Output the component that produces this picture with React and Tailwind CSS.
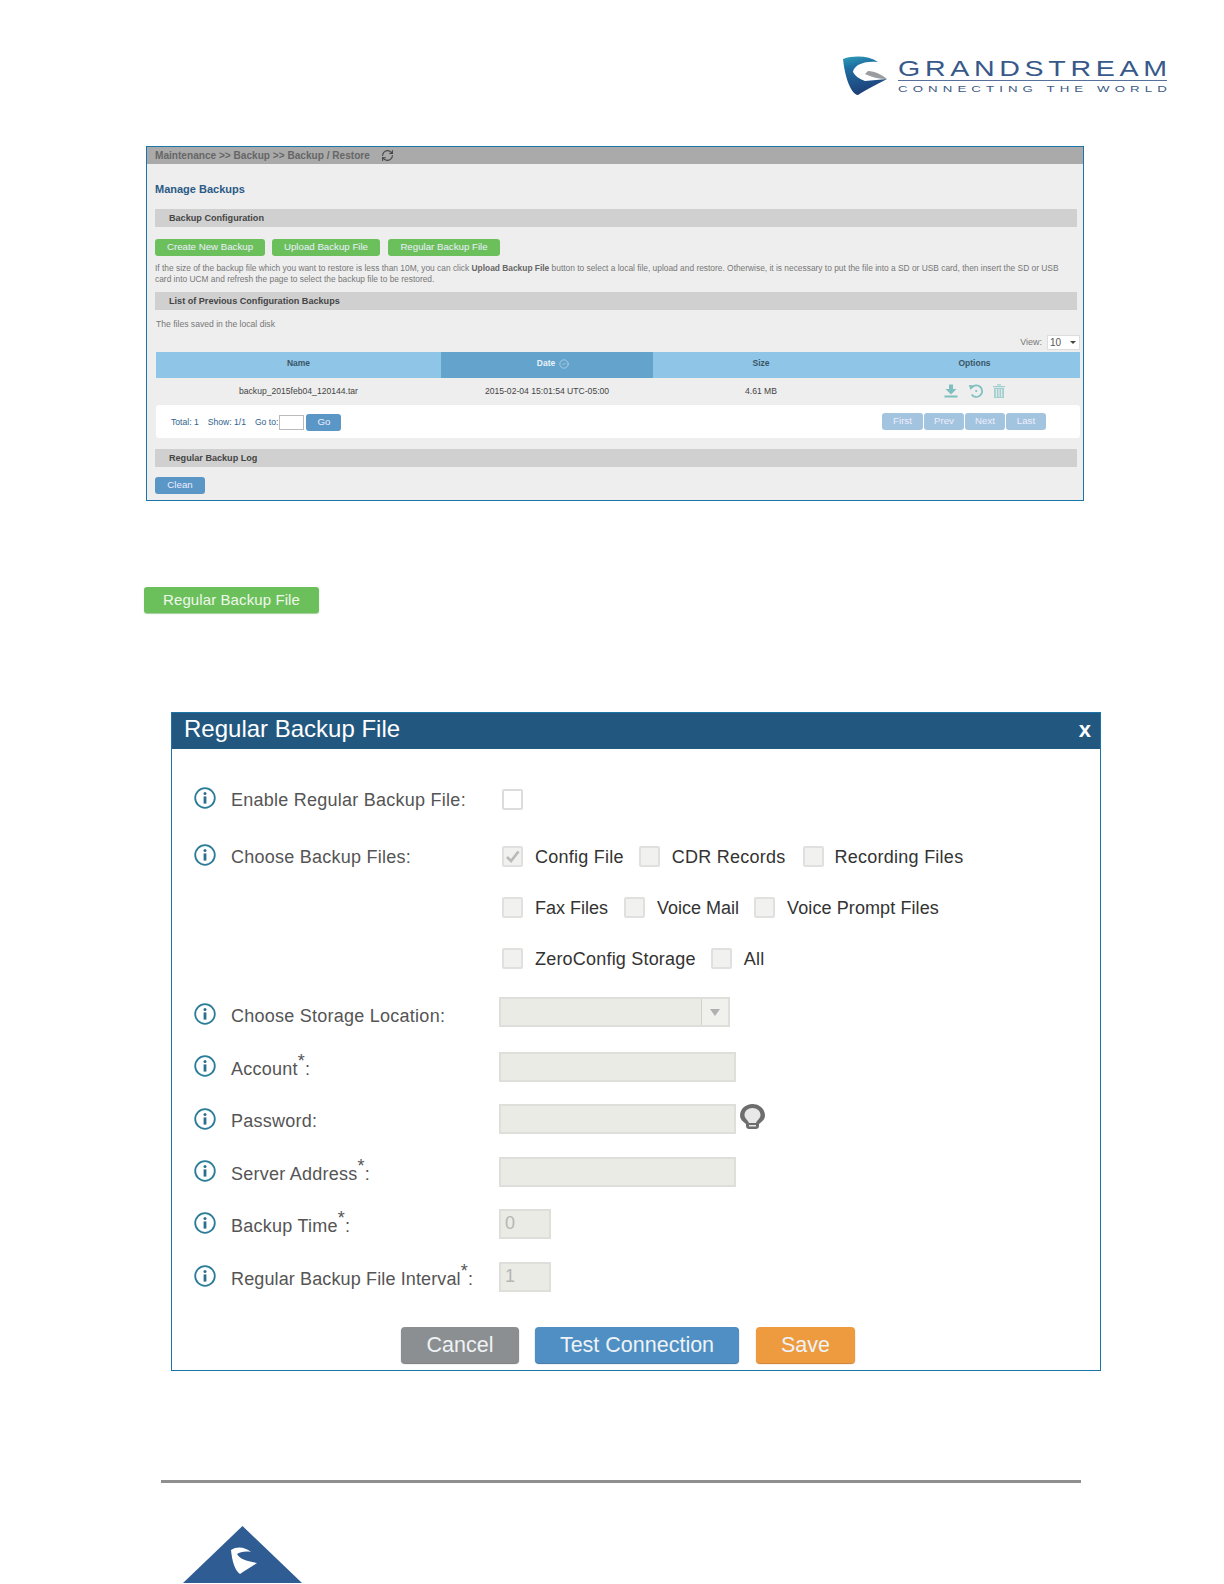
import { RefreshCw, CircleCheck } from 'lucide-react'

function Logo() {
  return (
    <svg width="340" height="52" viewBox="0 0 340 52">
      <defs>
        <linearGradient id="markBlue" x1="0" y1="0" x2="0.25" y2="1">
          <stop offset="0" stopColor="#2f9db5" />
          <stop offset="0.3" stopColor="#1f6fa3" />
          <stop offset="1" stopColor="#1d3f77" />
        </linearGradient>
      </defs>
      <path d="M8 9 C20 5 34 6 43 12 C36 11 28 12 23 15 C20 17 18 20 18 22 C20 26 24 29 30 31 L52 29 C42 34 31 40 23 45 C16 44 10 28 8 9 Z" fill="url(#markBlue)" />
      <path d="M33 21 C40 21 47 25 52 29 C44 29 36 27 30 24 Z" fill="#9a9c9f" />
      <g transform="translate(63 0) scale(1.3 1)">
        <text x="0" y="26" fontSize="22" fontFamily="'Liberation Sans', sans-serif" fill="#37598a" textLength="207" lengthAdjust="spacing">GRANDSTREAM</text>
      </g>
      <rect x="63" y="30" width="269" height="1" fill="#55709a" />
      <g transform="translate(63 0) scale(1.4 1)">
        <text x="0" y="42" fontSize="9.5" fontFamily="'Liberation Sans', sans-serif" fill="#3d5a85" textLength="192" lengthAdjust="spacing">CONNECTING THE WORLD</text>
      </g>
    </svg>
  )
}

function SectionBar({ children }) {
  return (
    <div className="h-[18px] bg-[#d0d0d0] pl-[14px] text-[9.1px] leading-[19px] font-bold text-[#444]">{children}</div>
  )
}

function SmallButton({ children, color = 'bg-[#6cc05c]', className = '' }) {
  return (
    <div className={`h-[17px] rounded-[3px] flex items-center justify-center text-[9.7px] text-[#eef] ${color} ${className}`}>
      {children}
    </div>
  )
}

function DownloadIcon() {
  return (
    <svg width="14" height="14" viewBox="0 0 14 14" fill="#7fbfbf">
      <path d="M5 0.5 H9 V5 H12.5 L7 10.5 L1.5 5 H5 Z" />
      <rect x="0.5" y="11.5" width="13" height="2" />
    </svg>
  )
}

function RestoreIcon() {
  return (
    <svg width="15" height="14" viewBox="0 0 15 14" fill="none" stroke="#7fbfbf" strokeWidth="1.7">
      <path d="M3.5 4 A5.8 5.8 0 1 1 3.6 10.5" />
      <path d="M0.8 1 L6 1.5 L2.5 6 Z" fill="#7fbfbf" stroke="none" />
      <circle cx="8.2" cy="7" r="1.1" fill="#7fbfbf" stroke="none" />
    </svg>
  )
}

function TrashIcon() {
  return (
    <svg width="12" height="14" viewBox="0 0 12 14" fill="#a3cfcf">
      <rect x="0" y="2" width="12" height="1.3" />
      <rect x="4" y="0.3" width="4" height="1.3" />
      <path d="M1 4 H11 V14 H1 Z M2.8 5 V13 H3.8 V5 Z M5.5 5 V13 H6.5 V5 Z M8.2 5 V13 H9.2 V5 Z" fillRule="evenodd" />
    </svg>
  )
}

function InfoIcon({ className = '' }) {
  return (
    <svg width="22" height="22" viewBox="0 0 22 22" className={`shrink-0 ${className}`}>
      <circle cx="11" cy="11" r="9.8" fill="none" stroke="#2b7c99" strokeWidth="1.8" />
      <circle cx="11" cy="6.6" r="1.5" fill="#2b6f8f" />
      <rect x="9.6" y="9.4" width="2.8" height="7.2" fill="#2b6f8f" />
    </svg>
  )
}

function BulbIcon() {
  return (
    <svg width="25" height="25" viewBox="0 0 25 25" className="ml-[4px] self-start">
      <path d="M12.5 0 C19.5 0 25 5 25 11.5 C25 15 22.5 17.5 19 20 V22 C19 23.8 17.5 25 16 25 H9 C7.5 25 6 23.8 6 22 V20 C2.5 17.5 0 15 0 11.5 C0 5 5.5 0 12.5 0 Z" fill="#6d6d6d" />
      <path d="M12.5 4 C17 4 20.5 7 20.5 11 C20.5 14.5 17 16 16 19 H9 C8 16 4.5 14.5 4.5 11 C4.5 7 8 4 12.5 4 Z" fill="#e8e8e8" />
      <rect x="9" y="21" width="7" height="1.5" fill="#e8e8e8" />
    </svg>
  )
}

function Checkbox({ checked, disabled = true, className = '' }) {
  return (
    <div className={`w-[21px] h-[21px] shrink-0 rounded-[2px] border-2 flex items-center justify-center ${disabled ? 'border-[#e0e0de] bg-[#f1f1f0]' : 'border-[#dcdcdc] bg-white'} ${className}`}>
      {checked && (
        <svg width="15" height="13" viewBox="0 0 15 13" fill="none" stroke="#b9b9b9" strokeWidth="2.6">
          <path d="M2 7 L6 11 L13.5 1.5" />
        </svg>
      )}
    </div>
  )
}

function FormRow({ label, star, iconClass = '', labelClass = 'mt-[4px]', track = 'tracking-[0.25px]', className = '', children }) {
  return (
    <div className={`flex items-center h-[30px] ${className}`}>
      <InfoIcon className={star ? '-mt-[2px]' : iconClass} />
      <div className={`w-[283px] shrink-0 pl-[15px] text-[18px] leading-[24px] text-[#555] whitespace-nowrap ${track} ${star ? '-mt-[2px]' : labelClass}`}>
        {label}
        {star && <span className="text-[18px] leading-none align-[8px]">*</span>}
        {star && ':'}
      </div>
      {children}
    </div>
  )
}

function Option({ label, checked, gap = 'ml-[12px]', track = 'tracking-[0.25px]', className = '' }) {
  return (
    <>
      <Checkbox checked={checked} className={className} />
      <span className={`${gap} ${track} mt-[2px] text-[18px] leading-[24px] text-[#333] whitespace-nowrap`}>{label}</span>
    </>
  )
}

function TextBox({ className = 'w-[237px]', value }) {
  return (
    <div className={`h-[30px] border-2 border-[#dededa] bg-[#ebebe5] pl-[4px] text-[18px] leading-[24px] text-[#b5b5b5] ${className}`}>{value}</div>
  )
}

export default function App() {
  return (
    <div className="w-[1224px] h-[1584px] overflow-hidden bg-white font-['Liberation_Sans',Arial,sans-serif]">
      <div className="h-[146px] pl-[835px] pt-[50px]">
        <Logo />
      </div>

      <div className="ml-[146px] w-[938px] h-[355px] border border-[#1b75a8] bg-[#eeeeee]">
        <div className="h-[17px] bg-[#aaaaaa] pl-[8px] flex items-center text-[10.1px] font-bold text-[#666]">
          Maintenance &gt;&gt; Backup &gt;&gt; Backup / Restore
          <RefreshCw size={13} strokeWidth={2} className="ml-[11px] text-[#444]" />
        </div>
        <div className="pl-[8px] pr-[6px]">
          <div className="mt-[17px] h-[16px] text-[11px] leading-[16px] font-bold text-[#2a5a85]">Manage Backups</div>
          <div className="mt-[12px]"><SectionBar>Backup Configuration</SectionBar></div>
          <div className="mt-[12px] flex">
            <SmallButton className="w-[110px]">Create New Backup</SmallButton>
            <SmallButton className="w-[108px] ml-[7px]">Upload Backup File</SmallButton>
            <SmallButton className="w-[112px] ml-[8px]">Regular Backup File</SmallButton>
          </div>
          <p className="mt-[7px] w-[915px] text-[8.4px] leading-[11px] text-[#777]">
            If the size of the backup file which you want to restore is less than 10M, you can click <b className="text-[#666]">Upload Backup File</b> button to select a local file, upload and restore. Otherwise, it is necessary to put the file into a SD or USB card, then insert the SD or USB card into UCM and refresh the page to select the backup file to be restored.
          </p>
          <div className="mt-[7px]"><SectionBar>List of Previous Configuration Backups</SectionBar></div>
          <div className="mt-[9px] h-[11px] pl-[1px] text-[8.6px] leading-[11px] text-[#777]">The files saved in the local disk</div>
          <div className="mt-[5px] h-[15px] -mr-[3px] flex items-center justify-end text-[9px] text-[#777]">
            View:
            <div className="ml-[5px] w-[33px] h-[15px] bg-white border border-[#ddd] flex items-center justify-between pl-[2px] pr-[3px] text-[10px] text-[#555]">
              10
              <span className="w-0 h-0 border-x-[3px] border-x-transparent border-t-[3px] border-t-[#444]" />
            </div>
          </div>
          <div className="mt-[2px] ml-[1px] -mr-[3px]">
            <div className="grid grid-cols-[285px_212px_216px_211px] h-[26px] bg-[#8fc5e6] text-[8.5px] font-bold text-[#3a5566] text-center leading-[23px]">
              <div>Name</div>
              <div className="bg-[#64a3cb] text-[#e8f2f8] font-normal flex items-center justify-center pl-[12px] pb-[3px]">
                <span className="font-bold">Date</span>
                <CircleCheck size={10} strokeWidth={1.2} className="ml-[4px]" />
              </div>
              <div>Size</div>
              <div>Options</div>
            </div>
            <div className="grid grid-cols-[285px_212px_216px_211px] h-[27px] items-center text-center text-[8.6px] text-[#444]">
              <div>backup_2015feb04_120144.tar</div>
              <div>2015-02-04 15:01:54 UTC-05:00</div>
              <div>4.61 MB</div>
              <div className="flex items-center justify-center gap-[10px] pb-[2px]">
                <DownloadIcon />
                <RestoreIcon />
                <TrashIcon />
              </div>
            </div>
            <div className="h-[33px] bg-white rounded-[3px] pl-[15px] pr-[34px] flex items-center justify-between">
              <div className="mt-[2px] flex items-center text-[8.6px] text-[#31638f]">
                <span>Total: 1</span>
                <span className="ml-[9px]">Show: 1/1</span>
                <span className="ml-[9px]">Go to:</span>
                <div className="ml-[1px] w-[25px] h-[15px] border border-[#bbb] bg-white" />
                <SmallButton color="bg-[#5a96c6]" className="ml-[2px] w-[35px]">Go</SmallButton>
              </div>
              <div className="flex gap-[1px]">
                <SmallButton color="bg-[#a3c4de]" className="w-[41px]">First</SmallButton>
                <SmallButton color="bg-[#a3c4de]" className="w-[40px]">Prev</SmallButton>
                <SmallButton color="bg-[#a3c4de]" className="w-[40px]">Next</SmallButton>
                <SmallButton color="bg-[#a3c4de]" className="w-[40px]">Last</SmallButton>
              </div>
            </div>
          </div>
          <div className="mt-[11px]"><SectionBar>Regular Backup Log</SectionBar></div>
          <SmallButton color="bg-[#5a96c6]" className="mt-[10px] w-[50px]">Clean</SmallButton>
        </div>
      </div>

      <div className="mt-[86px] ml-[144px] w-[175px] h-[26px] rounded-[3px] bg-[#6cc05c] shadow-[0_1px_1px_#9fcf97] flex items-center justify-center text-[15px] tracking-[0.1px] text-[#eef8ea]">
        Regular Backup File
      </div>

      <div className="mt-[99px] ml-[171px] w-[930px] h-[659px] border border-[#1b75a8] bg-white">
        <div className="h-[36px] bg-[#22587f] pl-[12px] pr-[9px] flex items-center justify-between text-white">
          <span className="text-[24px] mb-[4px]">Regular Backup File</span>
          <span className="text-[22px] font-bold leading-none mb-[2px]">x</span>
        </div>
        <div className="pl-[22px]">
          <FormRow label="Enable Regular Backup File:" className="mt-[34px]">
            <Checkbox disabled={false} className="ml-[3px] mt-[2px]" />
          </FormRow>
          <FormRow label="Choose Backup Files:" className="mt-[27px]">
            <div className="ml-[3px] mt-[2px] flex items-center">
              <Option label="Config File" checked />
              <Option label="CDR Records" className="ml-[15px]" />
              <Option label="Recording Files" className="ml-[17px]" gap="ml-[11px]" />
            </div>
          </FormRow>
          <div className="mt-[22px] pl-[308px] h-[30px] flex items-center">
            <Option label="Fax Files" track="tracking-[0px]" />
            <Option label="Voice Mail" track="tracking-[0px]" className="ml-[16px]" />
            <Option label="Voice Prompt Files" track="tracking-[0.1px]" className="ml-[15px]" />
          </div>
          <div className="mt-[21px] pl-[308px] h-[30px] flex items-center">
            <Option label="ZeroConfig Storage" track="tracking-[0.2px]" />
            <Option label="All" className="ml-[15px]" />
          </div>
          <FormRow label="Choose Storage Location:" iconClass="mt-[4px]" labelClass="mt-[8px]" className="mt-[24px]">
            <div className="w-[231px] h-[30px] border-2 border-[#dededa] bg-[#ebebe5] flex justify-end">
              <div className="w-[27px] border-l border-[#d0d0cc] bg-[#f0f0ec] flex items-center justify-center">
                <span className="w-0 h-0 border-x-[5px] border-x-transparent border-t-[7px] border-t-[#b0b0b0]" />
              </div>
            </div>
          </FormRow>
          <FormRow label="Account" star className="mt-[25px]"><TextBox /></FormRow>
          <FormRow label="Password:" className="mt-[22px]"><TextBox /><BulbIcon /></FormRow>
          <FormRow label="Server Address" star className="mt-[23px]"><TextBox /></FormRow>
          <FormRow label="Backup Time" star className="mt-[22px]"><TextBox className="w-[52px]" value="0" /></FormRow>
          <FormRow label="Regular Backup File Interval" star track="tracking-[0.13px]" className="mt-[23px]"><TextBox className="w-[52px]" value="1" /></FormRow>
        </div>
        <div className="mt-[35px] pl-[229px] flex text-[21.5px] text-[#eef3f6]">
          <div className="w-[118px] h-[36px] rounded-[4px] bg-[#8c8f91] shadow-[0_1px_1px_#777] flex items-center justify-center">Cancel</div>
          <div className="ml-[16px] w-[204px] h-[36px] rounded-[4px] bg-[#4f8fc4] shadow-[0_1px_1px_#3a6f9f] flex items-center justify-center">Test Connection</div>
          <div className="ml-[17px] w-[99px] h-[36px] rounded-[4px] bg-[#ee9a3f] shadow-[0_1px_1px_#c97a28] flex items-center justify-center">Save</div>
        </div>
      </div>

      <div className="mt-[109px] ml-[161px] w-[920px] h-[3px] bg-[#8f8f8f]" />

      <div className="mt-[43px] ml-[183px]">
        <svg width="120" height="58" viewBox="0 0 120 58" className="block">
          <path d="M59.5 0 L119 57 H0 Z" fill="#305c94" />
          <path d="M48 24 C54 20 62 21 68 26 C62 25 57 26 54 28 C57 33 63 35 74 37 C68 41 61 45 57 48 C52 45 49 35 48 24 Z" fill="#fff" />
        </svg>
      </div>
    </div>
  )
}
